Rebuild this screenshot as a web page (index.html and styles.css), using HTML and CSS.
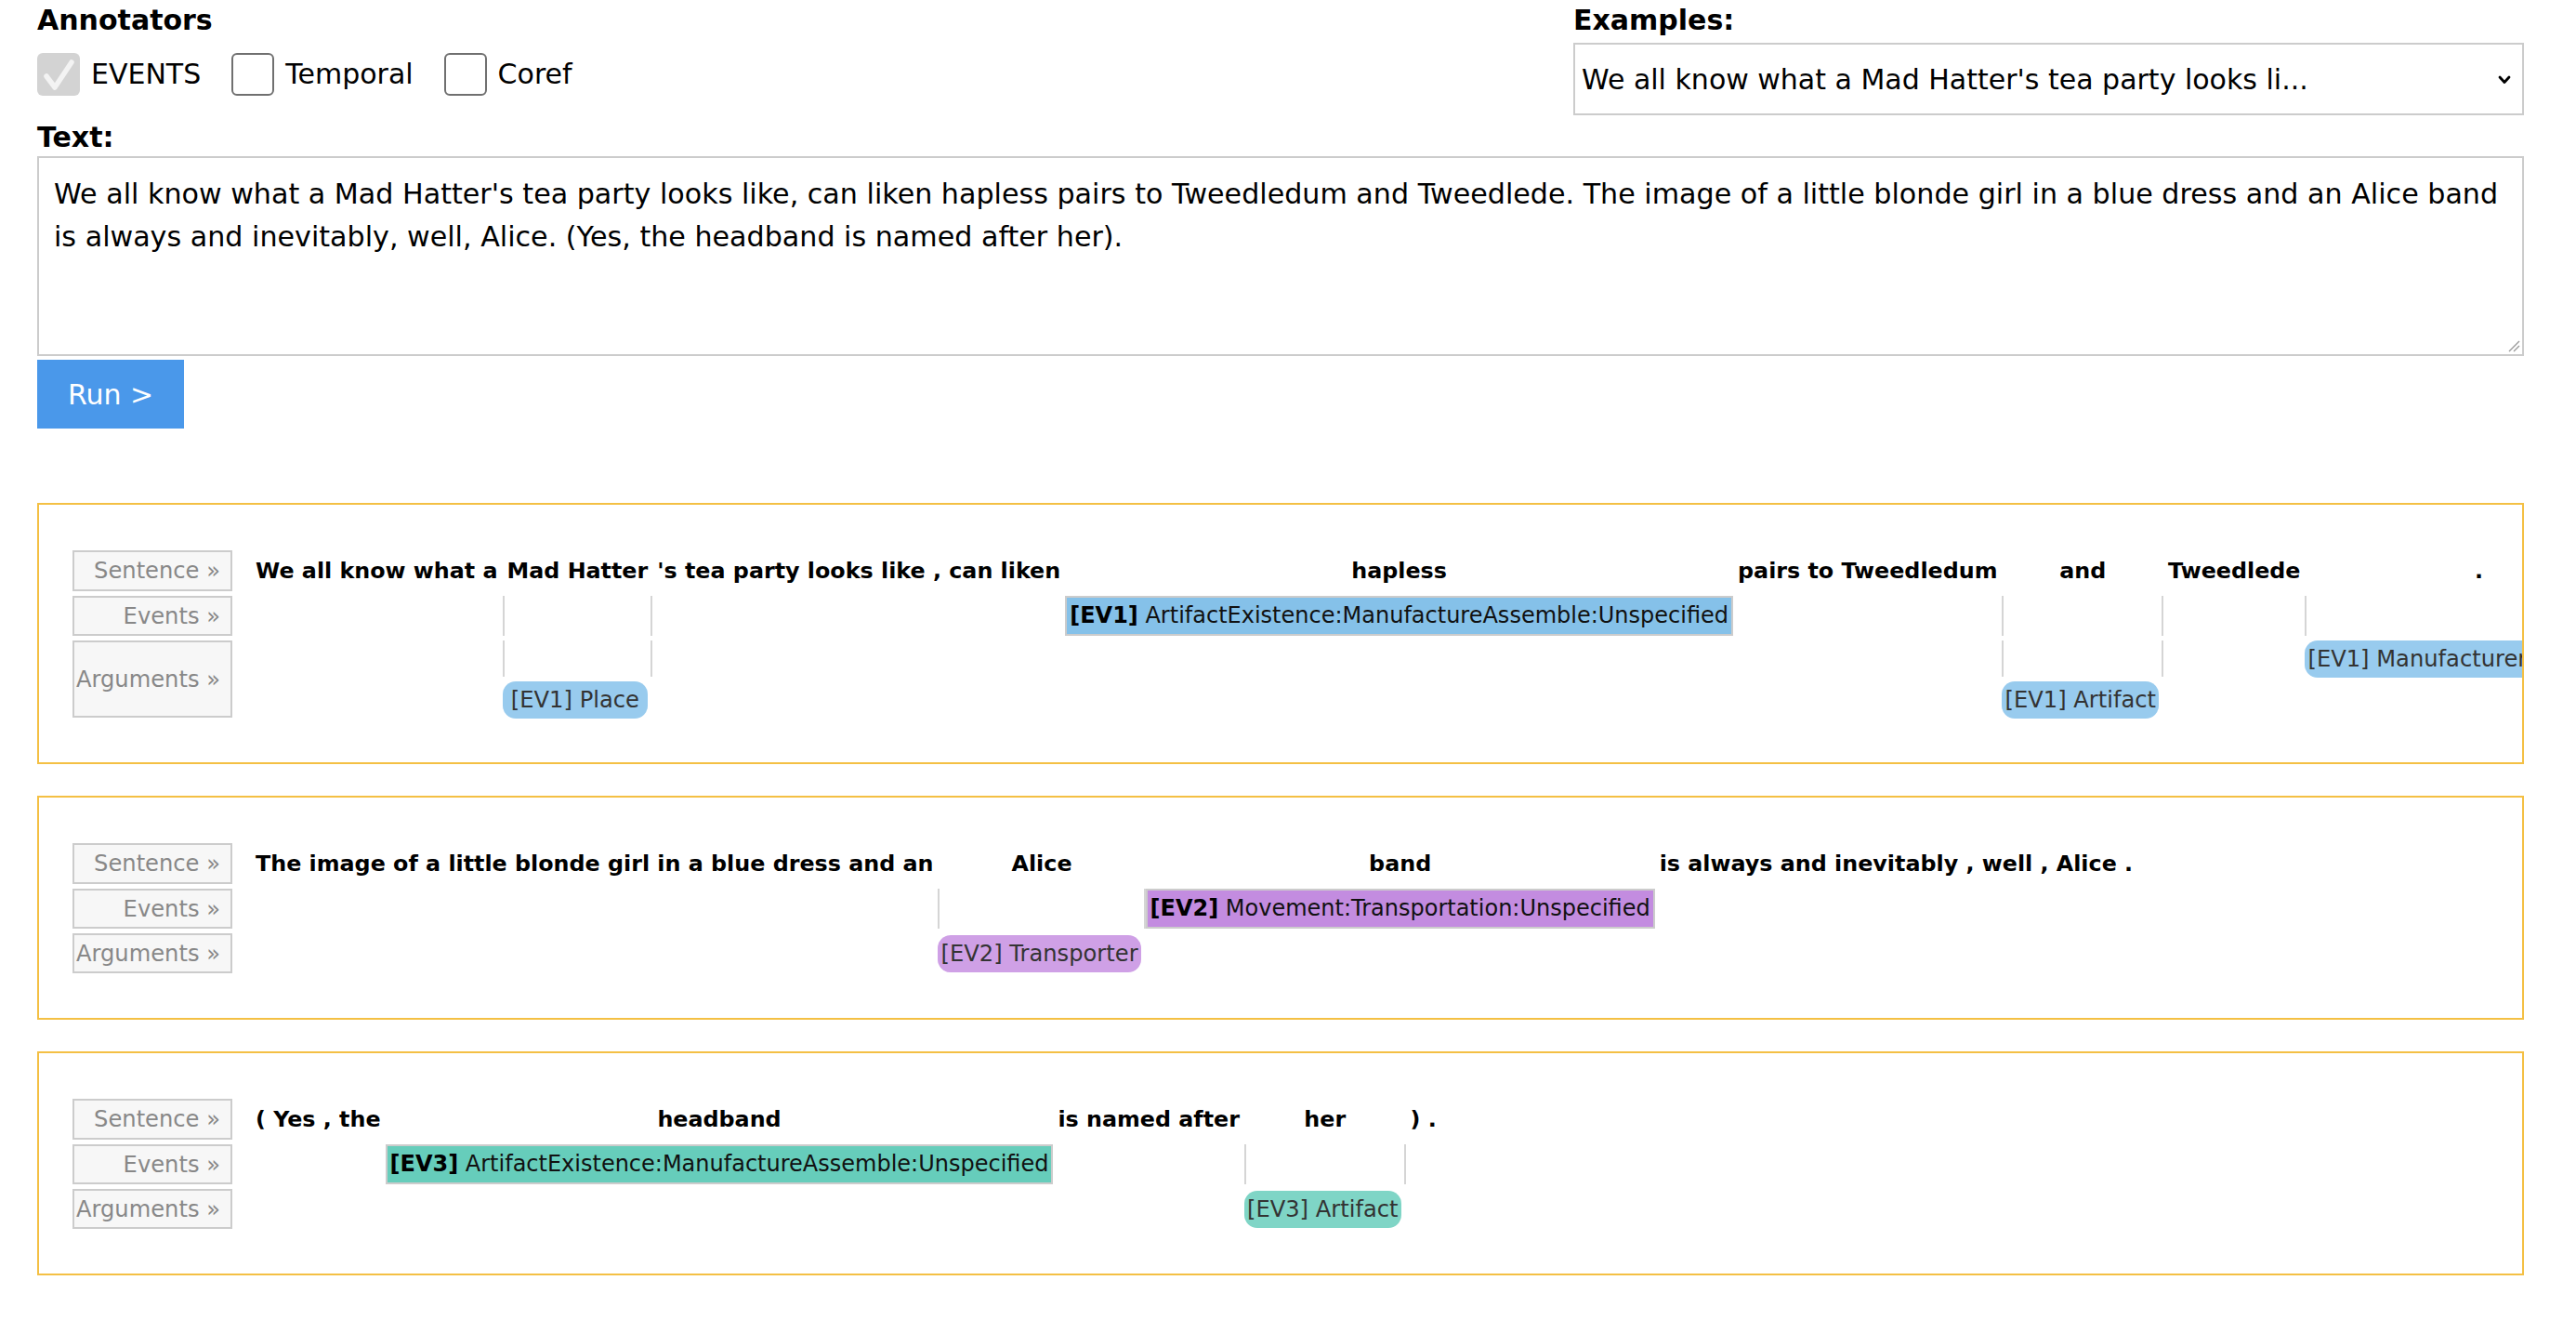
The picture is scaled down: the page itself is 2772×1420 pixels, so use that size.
FILE: index.html
```html
<!DOCTYPE html>
<html lang="en">
<head>
<meta charset="utf-8">
<title>Annotators</title>
<link rel="stylesheet" href="styles.css">
</head>
<body>
<div class="page">
  <div class="top">
    <div class="col">
      <div class="heading">Annotators</div>
      <div class="checks">
        <label class="check">
          <svg class="cb" width="46" height="46" viewBox="0 0 46 46"><rect width="46" height="46" rx="6" fill="#d3d3d3"/><path d="M10 25 L19 37 L37 10" fill="none" stroke="#f3f3f3" stroke-width="5.5" stroke-linecap="round" stroke-linejoin="round"/></svg>
          <span>EVENTS</span>
        </label>
        <label class="check">
          <span class="cb box"></span>
          <span>Temporal</span>
        </label>
        <label class="check">
          <span class="cb box"></span>
          <span>Coref</span>
        </label>
      </div>
    </div>
    <div class="col">
      <div class="heading">Examples:</div>
      <div class="select">
        <span>We all know what a Mad Hatter's tea party looks li...</span>
        <svg class="chev" width="16" height="11" viewBox="0 0 16 11"><path d="M3 3 L8 8.5 L13 3" fill="none" stroke="#000" stroke-width="2.8" stroke-linecap="round" stroke-linejoin="round"/></svg>
      </div>
    </div>
  </div>

  <div class="heading text-label">Text:</div>
  <div class="textarea">We all know what a Mad Hatter's tea party looks like, can liken hapless pairs to Tweedledum and Tweedlede. The image of a little blonde girl in a blue dress and an Alice band is always and inevitably, well, Alice. (Yes, the headband is named after her).
    <svg class="grip" width="16" height="16" viewBox="0 0 16 16"><path d="M15 4 L4 15 M15 9 L9 15" stroke="#9a9a9a" stroke-width="1.4"/></svg>
  </div>
  <button class="run">Run &gt;</button>

  <div class="sentences">
    <div class="sent">
      <div class="grid cols-8 lanes-2">
        <div class="rl">Sentence »</div>
        <div class="tk">We all know what a</div>
        <div class="tk">Mad Hatter</div>
        <div class="tk">'s tea party looks like , can liken</div>
        <div class="tk">hapless</div>
        <div class="tk">pairs to Tweedledum</div>
        <div class="tk">and</div>
        <div class="tk">Tweedlede</div>
        <div class="tk">.</div>

        <div class="rl">Events »</div>
        <div></div>
        <div class="gd"></div>
        <div></div>
        <div class="ev c1"><b>[EV1]</b> ArtifactExistence:ManufactureAssemble:Unspecified</div>
        <div></div>
        <div class="gd"></div>
        <div></div>
        <div class="gd"></div>

        <div class="rl args">Arguments »</div>
        <div></div>
        <div class="gd"></div>
        <div></div>
        <div></div>
        <div></div>
        <div class="gd"></div>
        <div></div>
        <div class="pl c1">[EV1] ManufacturerAssembler</div>

        <div></div>
        <div class="pl c1">[EV1] Place</div>
        <div></div>
        <div></div>
        <div></div>
        <div class="pl c1">[EV1] Artifact</div>
        <div></div>
        <div></div>
      </div>
    </div>

    <div class="sent">
      <div class="grid cols-4">
        <div class="rl">Sentence »</div>
        <div class="tk">The image of a little blonde girl in a blue dress and an</div>
        <div class="tk">Alice</div>
        <div class="tk">band</div>
        <div class="tk">is always and inevitably , well , Alice .</div>

        <div class="rl">Events »</div>
        <div></div>
        <div class="gd"></div>
        <div class="ev c2"><b>[EV2]</b> Movement:Transportation:Unspecified</div>
        <div></div>

        <div class="rl">Arguments »</div>
        <div></div>
        <div class="pl c2">[EV2] Transporter</div>
        <div></div>
        <div></div>
      </div>
    </div>

    <div class="sent">
      <div class="grid cols-5">
        <div class="rl">Sentence »</div>
        <div class="tk">( Yes , the</div>
        <div class="tk">headband</div>
        <div class="tk">is named after</div>
        <div class="tk">her</div>
        <div class="tk">) .</div>

        <div class="rl">Events »</div>
        <div></div>
        <div class="ev c3"><b>[EV3]</b> ArtifactExistence:ManufactureAssemble:Unspecified</div>
        <div></div>
        <div class="gd"></div>
        <div></div>

        <div class="rl">Arguments »</div>
        <div></div>
        <div></div>
        <div></div>
        <div class="pl c3">[EV3] Artifact</div>
        <div></div>
      </div>
    </div>
  </div>
</div>
</body>
</html>
```
FILE: styles.css
```css
* { box-sizing: border-box; }

body {
  margin: 0;
  background: #fff;
  color: #000;
  font-family: "DejaVu Sans", Verdana, sans-serif;
}

.page {
  padding: 4px 56px 40px 40px;
}

/* ---------- top controls ---------- */
.top {
  display: grid;
  grid-template-columns: 1fr 1023px;
}

.heading {
  font-size: 30px;
  font-weight: bold;
  line-height: 35px;
}

.checks {
  display: flex;
  align-items: center;
  margin-top: 18px;
}

.check {
  display: flex;
  align-items: center;
  gap: 12px;
  margin-right: 33px;
  font-size: 30px;
  line-height: 46px;
}

.cb {
  display: block;
  flex: none;
  width: 46px;
  height: 46px;
}

.cb.box {
  border: 2px solid #707070;
  border-radius: 6px;
  background: #fff;
}

.select {
  margin-top: 7px;
  height: 78px;
  border: 2px solid #cccccc;
  background: #fff;
  display: flex;
  align-items: center;
  justify-content: space-between;
  padding: 0 11px 0 7px;
  font-size: 30px;
  white-space: nowrap;
}

.chev { display: block; flex: none; }

.text-label {
  margin-top: 6px;
}

.textarea {
  position: relative;
  margin-top: 3px;
  height: 215px;
  border: 2px solid #cccccc;
  padding: 16px;
  font-size: 30.15px;
  line-height: 46px;
}

.grip {
  position: absolute;
  right: 2px;
  bottom: 2px;
}

.run {
  display: block;
  margin-top: 4px;
  height: 74px;
  padding: 0 33px;
  border: 0;
  background: #4a98ea;
  color: #fff;
  font-family: inherit;
  font-size: 30px;
}

/* ---------- sentence views ---------- */
.sentences {
  margin-top: 80px;
  display: flex;
  flex-direction: column;
  gap: 34px;
}

.sent {
  border: 2px solid #f4c044;
  padding: 49px 36px 48px;
  overflow: hidden;
}

.grid {
  display: grid;
  row-gap: 5px;
  column-gap: 0;
  grid-template-rows: 44px 43px 43px;
  justify-content: start;
}

.grid.lanes-2 {
  grid-template-rows: 44px 43px 39px 39px;
}

.cols-4 { grid-template-columns: 192px repeat(4, max-content); }
.cols-5 { grid-template-columns: 192px repeat(5, max-content); }
.cols-8 { grid-template-columns: 192px repeat(8, max-content); }

.rl {
  width: 172px;
  background: #f7f7f7;
  border: 2px solid #cccccc;
  color: #888;
  font-size: 24.2px;
  display: flex;
  align-items: center;
  justify-content: flex-end;
  padding-right: 11px;
  white-space: nowrap;
}

.lanes-2 .rl.args {
  grid-row: span 2;
}

.tk {
  font-weight: bold;
  font-size: 23.8px;
  padding: 0 5px;
  display: flex;
  align-items: center;
  justify-content: center;
  white-space: nowrap;
}

.gd {
  border-left: 2px solid #d5d5d5;
  border-right: 2px solid #d5d5d5;
}

.ev {
  border: 2px solid #cccccc;
  padding: 0 3px;
  font-size: 24px;
  line-height: 39px;
  white-space: nowrap;
  color: #111;
}

.ev b { color: #000; }

.pl {
  align-self: center;
  height: 40px;
  margin-right: 5px;
  padding: 0 3px;
  border-radius: 14px;
  font-size: 24.2px;
  line-height: 40px;
  color: #333;
  text-align: center;
  white-space: nowrap;
}

.ev.c1 { background: #85c1e9; }
.pl.c1 { background: #98cbee; }
.ev.c2 { background: #c38ce0; }
.pl.c2 { background: #cfa0e6; }
.ev.c3 { background: #66cdbb; }
.pl.c3 { background: #7fd5c6; }
```
